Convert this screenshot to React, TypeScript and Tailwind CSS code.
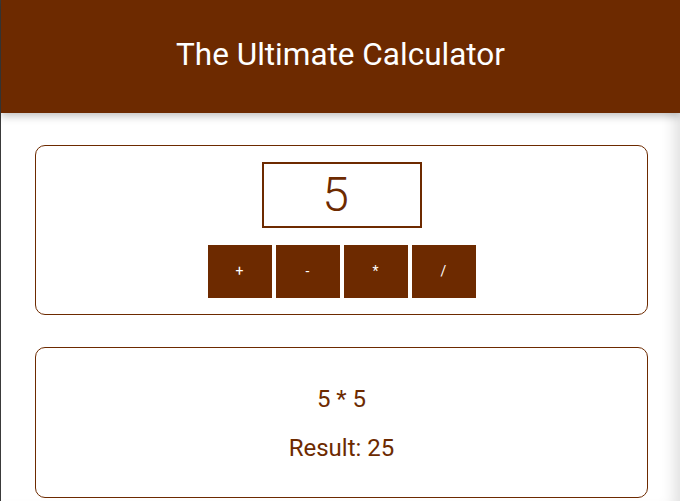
import React from "react";

const ops = ["+", "-", "*", "/"];

export default function App() {
  return (
    <div className="flex min-h-[501px] bg-white font-['Roboto',sans-serif]">
      <div className="w-px shrink-0 bg-[#3a3a3a]" />
      <div className="flex-1 flex flex-col shadow-[inset_-16px_0_14px_-10px_rgba(0,0,0,0.12)]">
        <header className="h-[113px] bg-[#6d2a00] flex items-center justify-center shadow-[0_3px_8px_rgba(0,0,0,0.25)] relative z-10">
          <h1 className="text-white text-[31.5px] leading-none pb-[3px]">The Ultimate Calculator</h1>
        </header>

        <main className="pl-[34px] pt-[32px] pb-[3px] w-[647px] flex flex-col gap-[32px]">
          {/* input + operators */}
          <section className="h-[170px] border border-[#6d2a00] rounded-[10px] flex flex-col items-center pt-[16px]">
            <div className="w-[160px] h-[66px] border-2 border-[#6d2a00] flex items-center justify-center pr-[12px] text-[#6d2a00] text-[48px] font-light leading-none">
              5
            </div>
            <div className="flex gap-[4px] mt-[17px]">
              {ops.map((op) => (
                <button
                  key={op}
                  className="w-[64px] h-[53px] bg-[#6d2a00] text-white text-[14px] flex items-center justify-center"
                >
                  {op}
                </button>
              ))}
            </div>
          </section>

          {/* result */}
          <section className="h-[151px] border border-[#6d2a00] rounded-[10px] flex flex-col items-center justify-center gap-[25px] pt-[2px] text-[#6d2a00] text-[24px] leading-none">
            <div>5 * 5</div>
            <div>Result: 25</div>
          </section>
        </main>
      </div>
    </div>
  );
}
